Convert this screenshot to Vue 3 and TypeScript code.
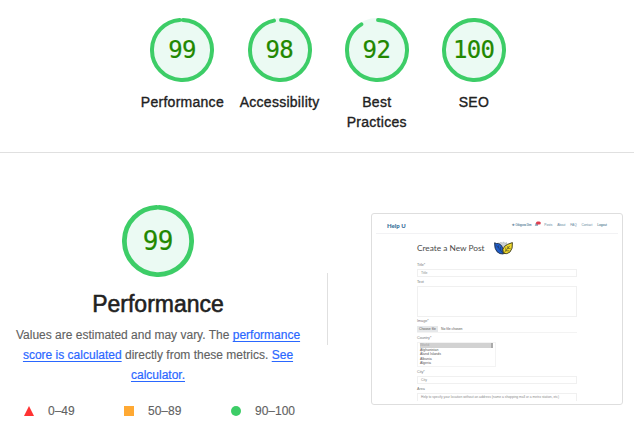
<script setup lang="ts">
interface Gauge {
  label: string
  score: number
  arc: number
}

const gauges: Gauge[] = [
  { label: 'Performance', score: 99, arc: 98.2 },
  { label: 'Accessibility', score: 98, arc: 96.2 },
  { label: 'Best Practices', score: 92, arc: 90.7 },
  { label: 'SEO', score: 100, arc: 100 },
]

const navItems: string[] = ['Posts', 'About', 'FAQ', 'Contact', 'Logout']
const countries: string[] = ['World', 'Afghanistan', 'Åland Islands', 'Albania', 'Algeria']
</script>

<template>
  <main class="report">
    <header class="scores">
      <div v-for="g in gauges" :key="g.label" class="gauge">
        <div class="dial">
          <svg viewBox="0 0 64 64">
            <circle class="base" cx="32" cy="32" r="32" />
            <circle class="arc" cx="32" cy="32" r="30" pathLength="100" :stroke-dasharray="`${g.arc} 100`" transform="rotate(-88 32 32)" />
          </svg>
          <span class="score">{{ g.score }}</span>
        </div>
        <div class="label">{{ g.label }}</div>
      </div>
    </header>

    <section class="category">
      <div class="summary">
        <div class="dial big">
          <svg viewBox="0 0 72 72">
            <circle class="base" cx="36" cy="36" r="36" />
            <circle class="arc" cx="36" cy="36" r="33.6" pathLength="100" stroke-dasharray="98.7 100" transform="rotate(-88 36 36)" />
          </svg>
          <span class="score">99</span>
        </div>
        <h1>Performance</h1>
        <p>
          <span class="line">Values are estimated and may vary. The <a>performance</a></span>
          <span class="line"><a>score is calculated</a> directly from these metrics. <a>See</a></span>
          <span class="line"><a>calculator.</a></span>
        </p>
        <div class="scale">
          <span class="range"><svg viewBox="0 0 10 10"><path d="M5 0L10 10H0Z" fill="#ff3333" /></svg>0–49</span>
          <span class="range"><svg viewBox="0 0 10 10"><path d="M0 0H10V10H0Z" fill="#ffa933" /></svg>50–89</span>
          <span class="range"><svg viewBox="0 0 10 10"><circle cx="5" cy="5" r="5" fill="#3dcd67" /></svg>90–100</span>
        </div>
      </div>
      <div class="divider"></div>
      <div class="shot">
        <div class="shot-head">
          <b class="brand">Help U</b>
          <nav>
            <span class="user">✚ Odugova Dim</span>
            <svg class="bell" viewBox="0 0 7 6"><path d="M.7 4.7Q1.5 3.5 1.6 2H4V4.8Z" fill="#83a0b5" /><rect x="2" y=".4" width="4.8" height="3" rx="1.5" fill="#df3f50" /></svg>
            <span v-for="n in navItems" :key="n" :class="['nav', n.toLowerCase()]">{{ n }}</span>
          </nav>
        </div>
        <div class="form">
          <div class="title">
            <h2>Create a New Post</h2>
            <svg class="leaf" viewBox="0 0 19 14">
              <path d="M5 2.5L7 1.2L8.2 2.2L9.5 .8L11 2.3L12.5 1.5L13 3.2L9.5 6Z" fill="#cbd1d5" stroke="#8b969d" stroke-width=".4" />
              <path d="M.6 1.8Q2.5 3 4.5 2.4Q8.5 4.2 8.9 7.8L9.4 13Q5.5 13.3 3 10.7Q.4 8 .6 1.8Z" fill="#1f5cc8" stroke="#1d2d45" stroke-width=".9" />
              <path d="M18.4 1.6Q19 8 15.9 11.1Q13 13.4 9.5 12.5Q7.7 8 10.5 5.4Q12.9 3.1 18.4 1.6Z" fill="#f4dc2c" stroke="#35371f" stroke-width=".9" />
              <path d="M9.8 12.2L15.8 4.8M11.8 9.6V6.5M11.8 9.8H15.3M13.8 7.4V5M13.8 7.4H16.6" fill="none" stroke="#3e4020" stroke-width=".6" />
              <path d="M2.5 4.5L8.6 11.8M4.4 6.8V4.4M6.4 9.2V6" fill="none" stroke="#1c3358" stroke-width=".6" />
            </svg>
          </div>
          <label>Title*</label>
          <div class="input">Title</div>
          <label class="l-text">Text</label>
          <div class="area"></div>
          <label class="l-image">Image*</label>
          <div class="file"><span>Choose file</span>No file chosen</div>
          <label class="l-country">Country*</label>
          <div class="select">
            <div v-for="(c, i) in countries" :key="c" :class="['option', { chosen: i === 0 }]">{{ c }}</div>
          </div>
          <label class="l-city">City*</label>
          <div class="input">City</div>
          <label class="l-area">Area</label>
          <div class="input last">Help to specify your location without an address (name a shopping mall or a metro station, etc)</div>
        </div>
      </div>
    </section>
  </main>
</template>

<style>
body { background: #fff; }
</style>

<style scoped>
* { box-sizing: border-box; }
.report { width: 634px; height: 431px; overflow: hidden; font-family: "Liberation Sans", Arial, sans-serif; color: #212121; }
.scores { height: 153px; border-bottom: 1px solid #e0e0e0; padding: 18px 0 0 133.8px; display: flex; }
.gauge { width: 97.2px; display: flex; flex-direction: column; align-items: center; }
.dial { width: 64px; height: 64px; display: grid; place-items: center; }
.dial svg, .dial .score { grid-area: 1 / 1; }
.dial svg { width: 100%; height: 100%; display: block; }
.base { fill: #ebfaf3; }
.arc { fill: none; stroke: #3dcd67; stroke-width: 4; stroke-linecap: round; }
.big .arc { stroke-width: 4.8; }
.score { font: 24px/28px "DejaVu Sans Mono", monospace; color: #228800; letter-spacing: -.6px; padding-right: .6px; -webkit-text-stroke: .2px #228800; }
.label { margin-top: 10px; width: 90px; text-align: center; font-size: 14px; line-height: 20px; letter-spacing: .27px; -webkit-text-stroke: .35px #212121; }
.category { display: flex; height: 278px; }
.summary { width: 327px; padding: 52px 11px 0 0; display: flex; flex-direction: column; align-items: center; }
.dial.big { width: 72px; height: 72px; }
.big .score { font-size: 26px; }
h1 { margin: 13px 0 6px; font-size: 23px; line-height: 28px; font-weight: 400; -webkit-text-stroke: .55px #212121; }
p { margin: 1px 0 0; font-size: 12px; line-height: 20px; color: #616161; -webkit-text-stroke: .12px #616161; }
.line { display: block; text-align: center; white-space: nowrap; }
a { color: #2a67ff; text-decoration: underline; text-underline-offset: 2px; text-decoration-thickness: 1px; -webkit-text-stroke: .2px #2a67ff; }
.scale { align-self: stretch; margin-top: 16px; padding-left: 24px; display: grid; grid-template-columns: 100px 107px auto; font-size: 12px; line-height: 20px; color: #616161; -webkit-text-stroke: .12px #616161; }
.range { display: flex; align-items: center; gap: 14px; }
.range svg { width: 10px; height: 10px; }
.divider { width: 1px; height: 72px; margin-top: 120px; background: #e0e0e0; }
.shot { margin: 60px 0 0 43px; width: 252px; height: 192px; border: 1px solid #dedede; border-radius: 3px; padding: 4px 4px 5px; font-size: 3.5px; color: #777; }
.shot-head { height: 16px; border-bottom: 1px solid #f2f2f4; padding: 0 11px; display: flex; justify-content: space-between; align-items: center; }
.brand { font: 900 6px/8px Lato, sans-serif; color: #37709a; }
nav { display: flex; align-items: center; font-size: 3.2px; line-height: 5px; color: #60869c; }
.user { font-size: 2.6px; -webkit-text-stroke: .1px #60869c; }
.bell { width: 7px; height: 6px; margin: -3px 3.5px 0 2.5px; }
.nav { margin-right: 4.8px; }
.logout { margin-right: 0; color: #245775; }
.form { margin-left: 41px; width: 160px; }
.title { height: 28px; display: flex; align-items: center; gap: 9px; }
h2 { margin: 0; font: 400 8.3px/12px Lato, sans-serif; color: #4a4a4a; white-space: nowrap; }
.leaf { width: 19px; height: 14px; }
label { display: block; height: 5px; line-height: 5px; margin-top: 1px; margin-bottom: 1px; font-size: 3.7px; }
.input { height: 8px; border: 1px solid #f0f0f0; padding-left: 3px; line-height: 7px; white-space: nowrap; color: #8a8a8a; }
.l-text { margin-top: 3px; }
.area { height: 31px; border: 1px solid #f0f0f0; }
.l-image { margin-top: 2px; margin-bottom: 2px; }
.file { display: flex; height: 7px; line-height: 7px; border-bottom: 1px solid #f3f3f3; color: #555; font-size: 3.4px; }
.file span { width: 21px; background: #e6e8ea; text-align: center; margin-right: 3px; }
.l-country { margin-top: 3px; }
.select { width: 79px; height: 25px; border: 1px solid #f3f3f3; padding: 0 2px; }
.option { height: 4.5px; line-height: 4.5px; color: #555; }
.chosen { background: #d2d2d2; color: #a5a5a5; border-right: 2px solid #aaa; }
.l-city { margin-top: 3px; }
.l-area { margin-top: 3px; margin-bottom: 1px; }
.last { border-bottom: 0; font-size: 3.3px; }
</style>
